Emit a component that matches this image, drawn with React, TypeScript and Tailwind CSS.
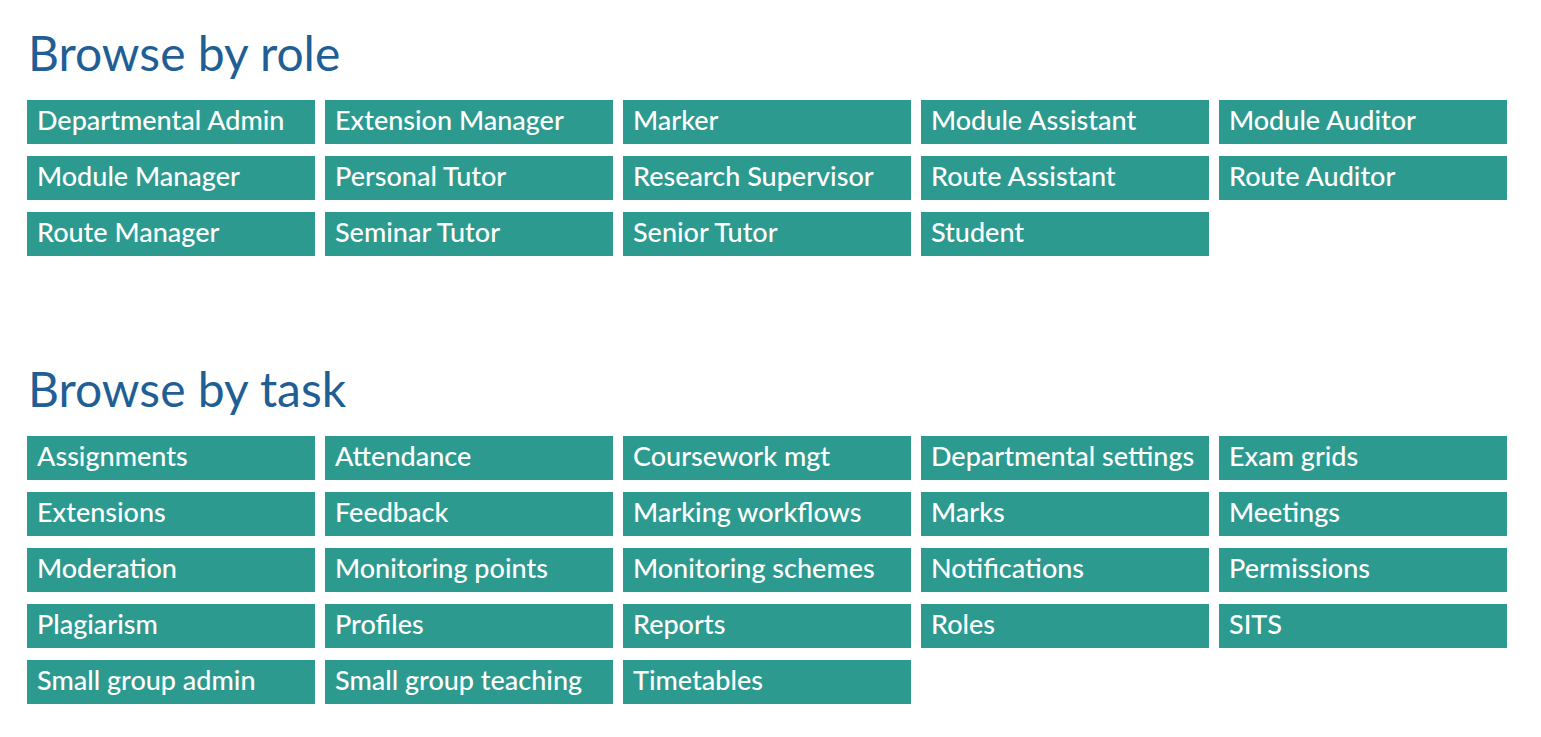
import React from 'react';

const roles = [
  'Departmental Admin', 'Extension Manager', 'Marker', 'Module Assistant', 'Module Auditor',
  'Module Manager', 'Personal Tutor', 'Research Supervisor', 'Route Assistant', 'Route Auditor',
  'Route Manager', 'Seminar Tutor', 'Senior Tutor', 'Student',
];

const tasks = [
  'Assignments', 'Attendance', 'Coursework mgt', 'Departmental settings', 'Exam grids',
  'Extensions', 'Feedback', 'Marking workflows', 'Marks', 'Meetings',
  'Moderation', 'Monitoring points', 'Monitoring schemes', 'Notifications', 'Permissions',
  'Plagiarism', 'Profiles', 'Reports', 'Roles', 'SITS',
  'Small group admin', 'Small group teaching', 'Timetables',
];

function Section({ title, items }: { title: string; items: string[] }) {
  return (
    <section>
      <h2 className="text-[48px] leading-[56px] text-[#1f5f95] mb-[19px] pl-[1px]">{title}</h2>
      <div className="grid grid-cols-[repeat(5,288px)] gap-x-[10px] gap-y-[12px]">
        {items.map((item) => (
          <a
            key={item}
            href="#"
            className="block h-[44px] bg-[#2c9a8f] text-white text-[27px] font-medium leading-[40px] px-[10px] whitespace-nowrap overflow-hidden"
          >
            {item}
          </a>
        ))}
      </div>
    </section>
  );
}

export default function App() {
  return (
    <div className="min-h-screen bg-white pl-[27px] pt-[25px] font-['Lato',sans-serif]">
      <Section title="Browse by role" items={roles} />
      <div className="h-[105px]" />
      <Section title="Browse by task" items={tasks} />
    </div>
  );
}
